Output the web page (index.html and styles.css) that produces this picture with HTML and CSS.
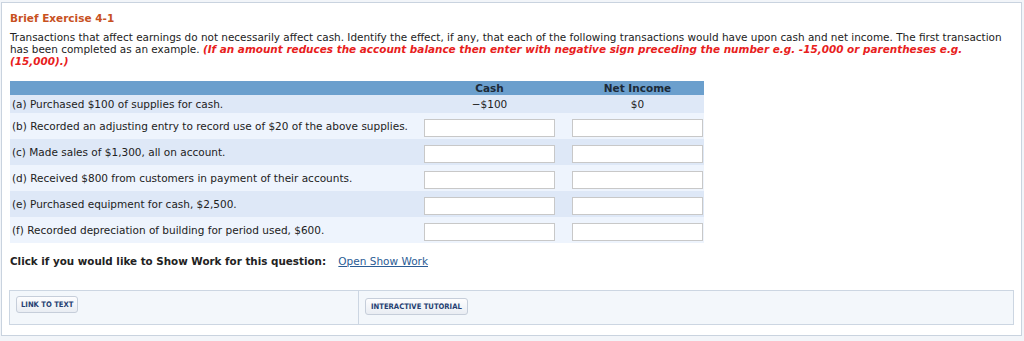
FILE: index.html
```html
<!DOCTYPE html>
<html lang="en">
<head>
  <meta charset="UTF-8" />
  <meta name="viewport" content="width=device-width, initial-scale=1.0" />
  <title>Brief Exercise 4-1</title>
  <link rel="stylesheet" href="styles.css">
</head>
<body>
  <div class="question">
    <h2 class="title">Brief Exercise 4-1</h2>
    <p class="prompt">
      Transactions that affect earnings do not necessarily affect cash. Identify the effect, if any, that each of the following transactions would have upon cash and net income. The first transaction has been completed as an example.
      <em class="hint">(If an amount reduces the account balance then enter with negative sign preceding the number e.g. -15,000 or parentheses e.g. (15,000).)</em>
    </p>

    <table class="answers">
      <thead>
        <tr>
          <th class="desc"></th>
          <th class="cash">Cash</th>
          <th class="net">Net Income</th>
        </tr>
      </thead>
      <tbody>
        <tr class="example">
          <td class="desc">(a) Purchased $100 of supplies for cash.</td>
          <td class="cash">&minus;$100</td>
          <td class="net">$0</td>
        </tr>
        <tr>
          <td class="desc">(b) Recorded an adjusting entry to record use of $20 of the above supplies.</td>
          <td class="cash"><input type="text" /></td>
          <td class="net"><input type="text" /></td>
        </tr>
        <tr>
          <td class="desc">(c) Made sales of $1,300, all on account.</td>
          <td class="cash"><input type="text" /></td>
          <td class="net"><input type="text" /></td>
        </tr>
        <tr>
          <td class="desc">(d) Received $800 from customers in payment of their accounts.</td>
          <td class="cash"><input type="text" /></td>
          <td class="net"><input type="text" /></td>
        </tr>
        <tr>
          <td class="desc">(e) Purchased equipment for cash, $2,500.</td>
          <td class="cash"><input type="text" /></td>
          <td class="net"><input type="text" /></td>
        </tr>
        <tr>
          <td class="desc">(f) Recorded depreciation of building for period used, $600.</td>
          <td class="cash"><input type="text" /></td>
          <td class="net"><input type="text" /></td>
        </tr>
      </tbody>
    </table>

    <p class="show-work">
      <strong>Click if you would like to Show Work for this question:</strong>
      <a href="#">Open Show Work</a>
    </p>

    <div class="resources">
      <div class="cell"><button class="res-btn">LINK TO TEXT</button></div>
      <div class="cell"><button class="res-btn tutorial">INTERACTIVE TUTORIAL</button></div>
    </div>
  </div>
</body>
</html>
```

FILE: styles.css
```css
body {
  margin: 0;
  background: #f2f5f9;
  font-family: "DejaVu Sans", Verdana, sans-serif;
  font-size: 10.5px;
  color: #222;
}

.question {
  margin: 2px 2px 0 1px;
  background: #fff;
  border: 1px solid #c9d3df;
  padding: 9px 9px 9px 8px;
  height: 314px;
}

.title {
  margin: 0 0 6px;
  font-size: 10.5px;
  line-height: 13px;
  font-weight: bold;
  color: #c8511f;
}

.prompt {
  margin: 0 0 14px;
  font-size: 10.45px;
  line-height: 12px;
}

.hint {
  color: #e8201c;
  font-weight: bold;
}

/* Answer grid */
.answers {
  border-collapse: collapse;
  width: 694px;
  table-layout: fixed;
}
.answers th {
  background: #6b9fcd;
  color: #1c2a38;
  font-weight: bold;
  height: 14px;
  padding: 0;
  text-align: center;
}
.answers td {
  padding: 0;
  height: 26px;
  text-align: center;
}
.answers .desc {
  text-align: left;
  width: 414px;
}
.answers td.desc { padding-left: 2px; }
.answers .cash {
  width: 148px;
  padding-right: 17px;
  box-sizing: border-box;
}
.answers .net {
  width: 132px;
  padding-right: 1px;
  box-sizing: border-box;
}
.answers tbody tr:nth-child(odd) { background: #dee8f7; }
.answers tbody tr:nth-child(even) { background: #eef4fd; }
.answers tr.example td { height: 18px; }

.answers input {
  display: block;
  width: 131px;
  height: 18px;
  box-sizing: border-box;
  border: 1px solid #c8c8c8;
  background: #fff;
  margin: 3px 0 0;
  padding: 0 3px;
  font: inherit;
}

.show-work {
  margin: 12px 0 0;
  font-size: 10.35px;
}
.show-work strong { margin-right: 9px; }
.show-work a {
  color: #2b5c95;
  font-weight: normal;
  font-size: 10.5px;
}

/* Resource links */
.resources {
  display: flex;
  margin: 23px 0 0 -1px;
  width: 1003px;
  height: 33px;
  border: 1px solid #ccd6e2;
  background: #f3f7fb;
}
.resources .cell {
  padding: 5px 6px;
}
.resources .cell:first-child {
  width: 336px;
  border-right: 1px solid #ccd6e2;
}

.res-btn {
  font-family: "DejaVu Sans Condensed", "DejaVu Sans", sans-serif;
  font-size: 7.6px;
  font-weight: bold;
  color: #263f72;
  background: linear-gradient(#fdfdfe, #e9edf3);
  border: 1px solid #c6ceda;
  border-radius: 3px;
  padding: 3px 4px;
}
.res-btn.tutorial {
  margin-top: 2px;
  padding: 3px 5px;
}
```
